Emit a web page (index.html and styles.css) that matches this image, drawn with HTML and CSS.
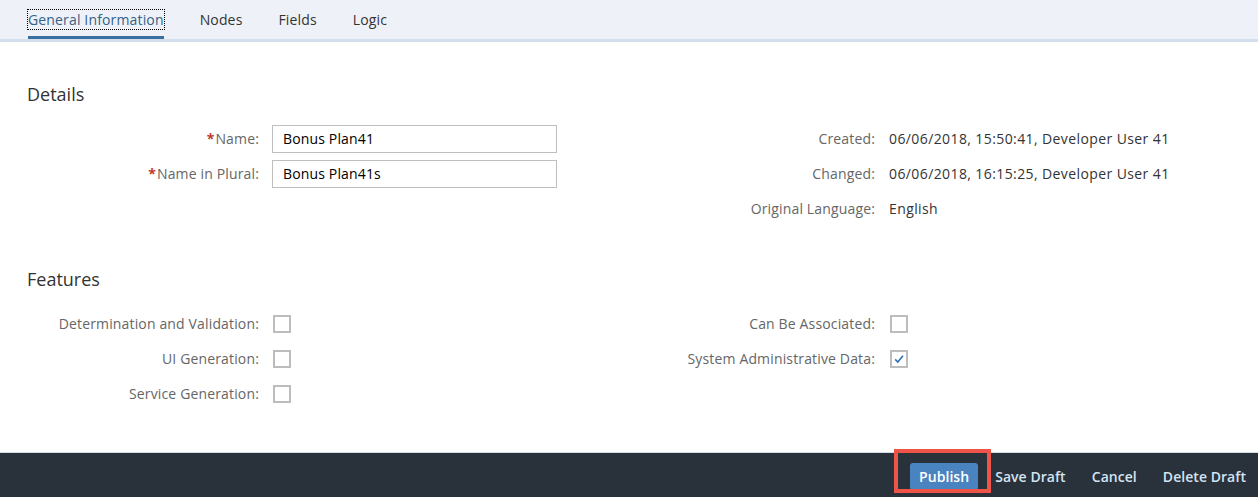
FILE: index.html
```html
<!DOCTYPE html>
<html>
<head>
<meta charset="utf-8">
<link rel="stylesheet" href="styles.css">
</head>
<body>
<div class="page">
  <div class="tabbar">
    <div class="tab active"><span class="focus">General Information</span></div>
    <div class="tab">Nodes</div>
    <div class="tab">Fields</div>
    <div class="tab">Logic</div>
  </div>

  <div class="content">
    <h2 class="title details-title">Details</h2>
    <div class="grid">
      <div class="label"><span class="req">*</span>Name:</div>
      <div class="field"><div class="input">Bonus Plan41</div></div>
      <div class="label">Created:</div>
      <div class="value">06/06/2018, 15:50:41, Developer User 41</div>

      <div class="label"><span class="req">*</span>Name in Plural:</div>
      <div class="field"><div class="input">Bonus Plan41s</div></div>
      <div class="label">Changed:</div>
      <div class="value">06/06/2018, 16:15:25, Developer User 41</div>

      <div class="label"></div>
      <div class="field"></div>
      <div class="label">Original Language:</div>
      <div class="value">English</div>
    </div>

    <h2 class="title features-title">Features</h2>
    <div class="grid features">
      <div class="label">Determination and Validation:</div>
      <div class="field"><span class="cb"></span></div>
      <div class="label">Can Be Associated:</div>
      <div class="value"><span class="cb"></span></div>

      <div class="label">UI Generation:</div>
      <div class="field"><span class="cb"></span></div>
      <div class="label">System Administrative Data:</div>
      <div class="value"><span class="cb checked"><svg width="12" height="12" viewBox="0 0 12 12"><path d="M2.2 6.4 L4.8 9 L10 2.8" fill="none" stroke="#2f6fb3" stroke-width="1.6"/></svg></span></div>

      <div class="label">Service Generation:</div>
      <div class="field"><span class="cb"></span></div>
      <div class="label"></div>
      <div class="value"></div>
    </div>
  </div>

  <div class="footer">
    <div class="btn primary">Publish<span class="highlight"></span></div>
    <div class="btn">Save Draft</div>
    <div class="btn">Cancel</div>
    <div class="btn">Delete Draft</div>
  </div>
</div>
</body>
</html>
```

FILE: styles.css
```css
html, body {
  margin: 0;
  padding: 0;
  background: #ffffff;
}

body {
  font-family: "Open Sans", "Liberation Sans", Arial, sans-serif;
  font-size: 14px;
  color: #333333;
}

.page {
  width: 1258px;
  height: 497px;
  display: flex;
  flex-direction: column;
  overflow: hidden;
}

.tabbar {
  height: 39px;
  background: #eef2f8;
  border-bottom: 3px solid #d3dfec;
  display: flex;
  align-items: stretch;
  padding-left: 28px;
  gap: 36px;
  box-sizing: content-box;
  flex: none;
}

.tab {
  display: flex;
  align-items: center;
  color: #333333;
  position: relative;
  font-size: 14px;
  letter-spacing: 0.15px;
}

.tab.active {
  color: #346187;
}

.tab.active::after {
  content: "";
  position: absolute;
  left: 0;
  right: 0;
  bottom: 0;
  height: 3px;
  background: #3a6f9f;
}

.focus {
  outline: 1px dotted #000000;
  outline-offset: 0px;
}

.content {
  flex: 1;
}

.title {
  margin: 0;
  font-size: 18px;
  font-weight: normal;
  color: #333333;
  padding-left: 27px;
  line-height: 24px;
}

.details-title {
  margin-top: 40px;
  margin-bottom: 15px;
}

.features-title {
  margin-top: 41px;
  margin-bottom: 15px;
}

.grid {
  display: grid;
  grid-template-columns: 259px 357px 259px 1fr;
  grid-auto-rows: 35px;
  align-items: center;
}

.label {
  text-align: right;
  color: #666666;
  white-space: nowrap;
  letter-spacing: 0.15px;
}

.req {
  color: #c0392b;
  font-weight: bold;
  margin-right: 1px;
}

.field {
  padding-left: 13px;
  display: flex;
  align-items: center;
}

.value {
  padding-left: 14px;
  color: #333333;
  display: flex;
  align-items: center;
  letter-spacing: 0.4px;
}

.input {
  width: 285px;
  height: 28px;
  box-sizing: border-box;
  border: 1px solid #bfbfbf;
  padding: 0 10px;
  display: flex;
  align-items: center;
  color: #000000;
  background: #ffffff;
  letter-spacing: 0.15px;
}

.features .field {
  padding-left: 14px;
}

.features .value {
  padding-left: 15px;
}

.cb {
  width: 18px;
  height: 18px;
  box-sizing: border-box;
  border: 2px solid #bdbdbd;
  display: inline-flex;
  align-items: center;
  justify-content: center;
  background: #ffffff;
}

.footer {
  flex: none;
  height: 41px;
  border-top: 1px solid #d5dde6;
  background: #29313a;
  display: flex;
  justify-content: flex-end;
  align-items: center;
  gap: 8px;
  padding-right: 3px;
  padding-top: 3px;
  box-sizing: content-box;
}

.btn {
  height: 27px;
  padding: 0 9px;
  display: flex;
  align-items: center;
  color: #d3e4f4;
  font-weight: 600;
  font-size: 14px;
  border-radius: 3px;
  position: relative;
  letter-spacing: 0.05px;
}

.btn.primary {
  background: #4a84c0;
  color: #ffffff;
  padding: 0 9px;
}

.highlight {
  position: absolute;
  left: -16px;
  right: -13px;
  top: -14px;
  bottom: -3px;
  border: 4px solid #ee5548;
  pointer-events: none;
}
```
